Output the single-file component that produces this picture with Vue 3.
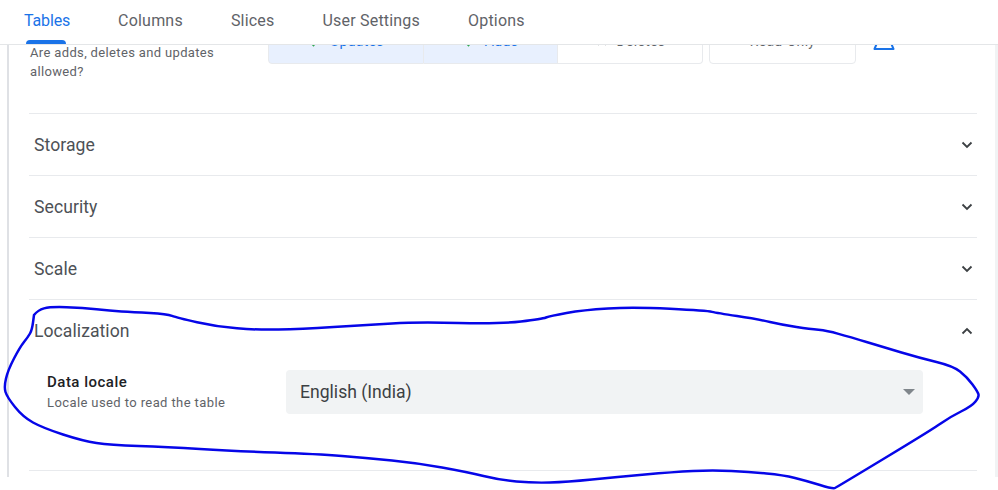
<script setup>
const tabs = ['Tables', 'Columns', 'Slices', 'User Settings', 'Options']
const sections = ['Storage', 'Security', 'Scale']
const pts = [[34,315],[38,310],[50,306.7],[83,307.7],[110,311],[133,312],[167,314],[177,317.7],[217,326.7],[257,330],[300,329],[367,325],[417,322],[500,324],[542,319],[550,316],[583,310],[633,307],[707,310.7],[717,313],[757,319],[783,325],[810,329],[827,330.7],[850,337],[883,347],[920,358],[953,366],[967,377],[978,392],[979,397],[972,406],[950,417],[933,429],[837,487],[833,489],[807,481],[783,475],[750,472],[713,470],[673,472],[617,477],[567,482],[533,483],[500,480],[467,472],[417,463],[367,458],[317,454],[233,451],[167,447],[110,445],[83,441],[43,428],[23,417],[7,397],[4,387],[8,370],[20,347],[28,337],[32,330],[34,315]]
// Smooth the traced points with quadratic curves through segment midpoints.
const mid = (a, b) => [(a[0] + b[0]) / 2, (a[1] + b[1]) / 2]
const scribble = pts.slice(1, -1).reduce((d, p, i) => {
  const m = mid(p, pts[i + 2])
  return `${d} Q${p[0]} ${p[1]} ${m[0]} ${m[1]}`
}, `M${pts[0][0]} ${pts[0][1]}`) + ` L${pts[pts.length - 1].join(' ')}`
</script>

<template>
  <div class="page">
    <nav class="tabs">
      <div v-for="(t, i) in tabs" :key="t" class="tab" :class="{ active: i === 0 }">{{ t }}</div>
    </nav>
    <main class="panel">
      <div class="inner">
        <div class="access">
          <p class="access-label">Are adds, deletes and updates allowed?</p>
          <div class="seg">
            <div class="btn on first">
              <svg class="mark" width="14" height="14" viewBox="0 0 14 14"><path d="M2 8l3.500 3.500L12 4" fill="none" stroke="#34a853" stroke-width="1.600"/></svg>
              Updates
            </div>
            <div class="btn on second">
              <svg class="mark" width="14" height="14" viewBox="0 0 14 14"><path d="M2 8l3.500 3.500L12 4" fill="none" stroke="#34a853" stroke-width="1.600"/></svg>
              Adds
            </div>
            <div class="btn third">
              <svg class="mark" width="14" height="14" viewBox="0 0 14 14"><path d="M3 3l8 8M11 3l-8 8" fill="none" stroke="#9aa0a6" stroke-width="1.600"/></svg>
              Deletes
            </div>
          </div>
          <div class="btn readonly">Read-Only</div>
          <svg class="warn" width="22" height="28" viewBox="0 0 22 28">
            <path d="M11 2L1.500 25h19z" fill="none" stroke="#1a73e8" stroke-width="2" stroke-linejoin="round"/>
          </svg>
        </div>

        <div v-for="s in sections" :key="s" class="row">
          <span class="title">{{ s }}</span>
          <svg width="12" height="8" viewBox="0 0 12 8"><path d="M1.500 1.500L6 6l4.500-4.500" fill="none" stroke="#3c4043" stroke-width="1.800"/></svg>
        </div>

        <section class="open">
          <div class="row plain">
            <span class="title">Localization</span>
            <svg width="12" height="8" viewBox="0 0 12 8"><path d="M1.500 6.500L6 2l4.500 4.500" fill="none" stroke="#3c4043" stroke-width="1.800"/></svg>
          </div>
          <div class="field">
            <div class="field-label">
              <div class="name">Data locale</div>
              <div class="hint">Locale used to read the table</div>
            </div>
            <div class="select">
              <span>English (India)</span>
              <i class="caret"></i>
            </div>
          </div>
        </section>
      </div>
    </main>
    <svg class="scribble" width="998" height="490" viewBox="0 0 998 490">
      <path :d="scribble" fill="none" stroke="#0606e8" stroke-width="2.500" stroke-linejoin="round" stroke-linecap="round"/>
    </svg>
  </div>
</template>

<style scoped>
.page {
  position: relative;
  width: 998px;
  height: 490px;
  overflow: hidden;
  background: #fff;
  font-family: Roboto, "Liberation Sans", sans-serif;
}
.tabs {
  position: relative;
  z-index: 1;
  display: flex;
  gap: 48px;
  height: 44px;
  padding-left: 24px;
  background: #fff;
  border-bottom: 1px solid #e4e6e8;
}
.tab {
  position: relative;
  padding-top: 12px;
  font-size: 16px;
  line-height: 18px;
  letter-spacing: 0.2px;
  color: #5f6368;
}
.tab.active {
  color: #1a73e8;
  letter-spacing: -0.15px;
}
.tab.active::after {
  content: "";
  position: absolute;
  left: 2px;
  right: 4px;
  bottom: 0;
  height: 4px;
  background: #1a73e8;
  border-radius: 4px 4px 0 0;
}
.panel {
  height: 432px;
  margin-left: 7px;
  border-left: 2px solid #dfe1e5;
  border-right: 3px solid #f1f3f4;
  overflow: hidden;
}
.inner {
  width: 948px;
  margin-left: 20px;
  margin-top: -21px;
}
.access {
  display: flex;
  height: 89px;
  border-bottom: 1px solid #e8eaed;
}
.access-label {
  width: 239px;
  margin: 19px 0 0;
  padding-left: 1px;
  padding-right: 40px;
  box-sizing: border-box;
  font-size: 13px;
  line-height: 19px;
  letter-spacing: 0.35px;
  color: #5f6368;
}
.seg {
  display: flex;
}
.btn {
  box-sizing: border-box;
  display: flex;
  align-items: center;
  justify-content: center;
  gap: 8px;
  height: 40px;
  padding-bottom: 6px;
  font-size: 14px;
  letter-spacing: 0.3px;
  color: #5f6368;
  border: 1px solid #e8eaed;
  background: #fff;
}
.on {
  background: #e8f0fe;
  color: #1a73e8;
}
.first {
  width: 156px;
  border-radius: 0 0 0 4px;
}
.second {
  width: 134px;
  border-left: 0;
}
.third {
  width: 145px;
  border-left: 0;
  border-radius: 0 0 4px 0;
}
.readonly {
  width: 147px;
  margin-left: 6px;
  border-radius: 4px;
}
.warn {
  margin-left: 17px;
}
.row {
  box-sizing: border-box;
  display: flex;
  align-items: center;
  justify-content: space-between;
  height: 62px;
  padding: 0 4px 0 5px;
  border-bottom: 1px solid #e8eaed;
}
.row.plain {
  border-bottom: 0;
}
.title {
  font-size: 17.6px;
  letter-spacing: 0.05px;
  color: #4d5156;
}
.open {
  box-sizing: border-box;
  height: 171px;
  border-bottom: 1px solid #e8eaed;
}
.field {
  display: flex;
  align-items: center;
  margin-top: 8px;
  padding-left: 18px;
}
.field-label {
  width: 239px;
}
.name {
  font-size: 15px;
  font-weight: 500;
  line-height: 20px;
  letter-spacing: 0.5px;
  color: #202124;
}
.hint {
  margin-top: 2px;
  font-size: 13px;
  line-height: 18px;
  letter-spacing: 0.4px;
  color: #5f6368;
}
.select {
  box-sizing: border-box;
  display: flex;
  align-items: center;
  justify-content: space-between;
  width: 637px;
  height: 44px;
  padding: 0 8px 0 14px;
  border-radius: 4px;
  background: #f1f3f4;
  font-size: 17.6px;
  color: #3c4043;
}
.caret {
  width: 0;
  height: 0;
  border-left: 6px solid transparent;
  border-right: 6px solid transparent;
  border-top: 6px solid #80868b;
}
.scribble {
  position: absolute;
  left: 0;
  top: 0;
  z-index: 2;
  pointer-events: none;
}
</style>
